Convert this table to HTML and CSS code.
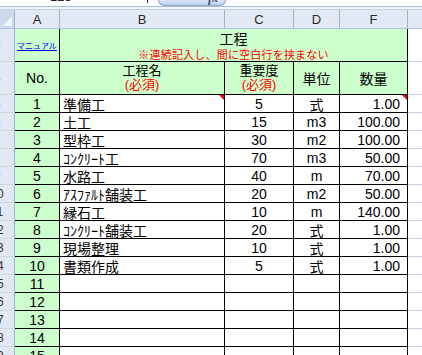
FILE: index.html
```html
<!DOCTYPE html>
<html lang="ja">
<head>
<meta charset="utf-8">
<link rel="stylesheet" href="styles.css">
</head>
<body>
<div class="topbar">
  <div class="namebox">128</div>
  <div class="dd"></div>
  <div class="fxbtn"><span class="fx">fx</span></div>
</div>
<div class="topsep"></div>
<div class="sheet">
  <div class="hd corner"></div>
  <div class="hd">A</div>
  <div class="hd">B</div>
  <div class="hd">C</div>
  <div class="hd">D</div>
  <div class="hd">F</div>
  <div class="hd"></div>

  <div class="rh">3</div>
  <div class="c g ctr manual"><a class="link" href="#">マニュアル</a></div>
  <div class="c g title span4">
    <div class="t1">工程</div>
    <div class="t2">※連続記入し、間に空白行を挟まない</div>
  </div>
  <div class="gx"></div>

  <div class="rh">4</div>
  <div class="c g ctr">No.</div>
  <div class="c g ctr col2"><span>工程名</span><span class="red">(必須)</span></div>
  <div class="c g ctr col2"><span>重要度</span><span class="red">(必須)</span></div>
  <div class="c g ctr">単位</div>
  <div class="c g ctr">数量</div>
  <div class="gx"></div>

  <div class="rh">5</div><div class="c g ctr">1</div><div class="c lt note">準備工</div><div class="c ctr">5</div><div class="c ctr">式</div><div class="c rt note">1.00</div><div class="gx"></div>
  <div class="rh">6</div><div class="c g ctr">2</div><div class="c lt">土工</div><div class="c ctr">15</div><div class="c ctr">m3</div><div class="c rt">100.00</div><div class="gx"></div>
  <div class="rh">7</div><div class="c g ctr">3</div><div class="c lt">型枠工</div><div class="c ctr">30</div><div class="c ctr">m2</div><div class="c rt">100.00</div><div class="gx"></div>
  <div class="rh">8</div><div class="c g ctr">4</div><div class="c lt">ｺﾝｸﾘｰﾄ工</div><div class="c ctr">70</div><div class="c ctr">m3</div><div class="c rt">50.00</div><div class="gx"></div>
  <div class="rh">9</div><div class="c g ctr">5</div><div class="c lt">水路工</div><div class="c ctr">40</div><div class="c ctr">m</div><div class="c rt">70.00</div><div class="gx"></div>
  <div class="rh">10</div><div class="c g ctr">6</div><div class="c lt">ｱｽﾌｧﾙﾄ舗装工</div><div class="c ctr">20</div><div class="c ctr">m2</div><div class="c rt">50.00</div><div class="gx"></div>
  <div class="rh">11</div><div class="c g ctr">7</div><div class="c lt">縁石工</div><div class="c ctr">10</div><div class="c ctr">m</div><div class="c rt">140.00</div><div class="gx"></div>
  <div class="rh">12</div><div class="c g ctr">8</div><div class="c lt">ｺﾝｸﾘｰﾄ舗装工</div><div class="c ctr">20</div><div class="c ctr">式</div><div class="c rt">1.00</div><div class="gx"></div>
  <div class="rh">13</div><div class="c g ctr">9</div><div class="c lt">現場整理</div><div class="c ctr">10</div><div class="c ctr">式</div><div class="c rt">1.00</div><div class="gx"></div>
  <div class="rh">14</div><div class="c g ctr">10</div><div class="c lt">書類作成</div><div class="c ctr">5</div><div class="c ctr">式</div><div class="c rt">1.00</div><div class="gx"></div>
  <div class="rh">15</div><div class="c g ctr">11</div><div class="c"></div><div class="c"></div><div class="c"></div><div class="c"></div><div class="gx"></div>
  <div class="rh">16</div><div class="c g ctr">12</div><div class="c"></div><div class="c"></div><div class="c"></div><div class="c"></div><div class="gx"></div>
  <div class="rh">17</div><div class="c g ctr">13</div><div class="c"></div><div class="c"></div><div class="c"></div><div class="c"></div><div class="gx"></div>
  <div class="rh">18</div><div class="c g ctr">14</div><div class="c"></div><div class="c"></div><div class="c"></div><div class="c"></div><div class="gx"></div>
  <div class="rh">19</div><div class="c g ctr">15</div><div class="c"></div><div class="c"></div><div class="c"></div><div class="c"></div><div class="gx"></div>
</div>
</body>
</html>
```
FILE: styles.css
```css
html, body {
  margin: 0;
  padding: 0;
  background: #ffffff;
  overflow: hidden;
}
body {
  width: 422px;
  height: 355px;
  font-family: "Liberation Sans", "Noto Sans CJK JP", sans-serif;
  color: #000;
}
.topbar {
  height: 6px;
  display: flex;
  overflow: hidden;
  border-bottom: 1px solid #a9bedd;
  background: #ffffff;
}
.namebox {
  margin-left: 50px;
  width: 97px;
  font-size: 13px;
  line-height: 14px;
  margin-top: -10px;
  height: 16px;
  color: #222;
}
.dd {
  width: 1px;
  height: 3px;
  background: #333;
  margin-right: 10px;
}
.fxbtn {
  width: 66px;
  height: 5px;
  border: 1px solid #8ea8d0;
  border-top: none;
  border-radius: 0 0 7px 7px;
  background: linear-gradient(#dce6f6, #bccfec);
  display: flex;
  justify-content: flex-end;
  overflow: hidden;
}
.fx {
  font-family: "Liberation Serif", serif;
  font-style: italic;
  font-weight: bold;
  font-size: 12px;
  line-height: 12px;
  margin-top: -8px;
  margin-right: 7px;
  color: #3a4a6a;
}
.topsep {
  height: 2px;
  background: #f1f5fb;
  border-bottom: 1px solid #c3d1e8;
}
.sheet {
  margin-left: -16px;
  display: grid;
  grid-template-columns: 31px 45px 165px 69px 46px 68px 40px;
  grid-template-rows: 19px 33px 33px repeat(15, 18px);
}
.sheet > div {
  box-sizing: border-box;
}
.hd {
  background: #e3e9f4;
  border-right: 1px solid #9fb4d2;
  border-bottom: 1px solid #b3c4de;
  display: flex;
  align-items: center;
  justify-content: center;
  font-size: 13px;
  color: #2a2a2a;
}
.corner {
  background:
    linear-gradient(135deg, transparent 55%, #f2f5fb 55%) 18px 4px / 10px 12px no-repeat,
    #cdd9ec;
}
.rh {
  background: #e3e9f4;
  border-right: 1px solid #9fb4d2;
  border-bottom: 1px solid #cbd6e8;
  display: flex;
  align-items: center;
  justify-content: center;
  padding-right: 4px;
  font-size: 12px;
  color: #333;
}
.c {
  border-right: 1px solid #000;
  border-bottom: 1px solid #000;
  display: flex;
  align-items: center;
  font-size: 14px;
  white-space: nowrap;
  overflow: hidden;
}
.g {
  background: #ccffcc;
}
.ctr {
  justify-content: center;
}
.lt {
  padding-left: 3px;
}
.rt {
  justify-content: flex-end;
  padding-right: 7px;
}
.gx {
  border-bottom: 1px solid #c4cee8;
}
.manual {
  padding-top: 2px;
}
.link {
  font-family: "Noto Sans CJK JP", sans-serif;
  font-size: 8px;
  line-height: 10px;
  color: #0000ff;
  text-decoration: underline;
}
.span4 {
  grid-column: span 4;
}
.title {
  display: block;
  padding-top: 1px;
  text-align: center;
}
.t1 {
  font-size: 14px;
  line-height: 16px;
  font-family: "Noto Sans CJK JP", sans-serif;
}
.t2 {
  font-size: 11px;
  line-height: 16px;
  letter-spacing: 0.2px;
  color: #ff0000;
  font-family: "Noto Sans CJK JP", sans-serif;
}
.col2 {
  flex-direction: column;
  font-size: 13px;
  line-height: 14px;
}
.red {
  color: #ff0000;
}
.note {
  position: relative;
}
.note::after {
  content: "";
  position: absolute;
  top: 0;
  right: 0;
  border-top: 5px solid #ff0000;
  border-left: 5px solid transparent;
}
```
